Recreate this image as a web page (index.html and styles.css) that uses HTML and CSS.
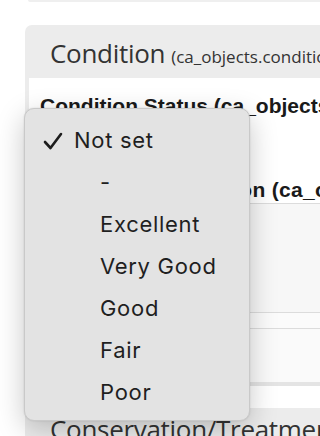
FILE: index.html
```html
<!DOCTYPE html>
<html>
<head>
<meta charset="utf-8">
<link rel="stylesheet" href="styles.css">
</head>
<body>
<div class="topbar"></div>
<div class="panel">
  <div class="panel-head"><span class="title">Condition</span> <span class="code">(ca_objects.condition)</span></div>
  <div class="panel-body">
    <div class="label label-first">Condition Status (ca_objects.condition_status)</div>
    <div class="label label-second">Condition Description (ca_objects.condition_desc)</div>
    <div class="textbox"></div>
    <div class="rule"></div>
    <div class="gap"></div>
    <div class="rule"></div>
    <div class="space"></div>
    <div class="band"></div>
    <div class="tail"></div>
  </div>
  <div class="panel-head second"><span class="title">Conservation/Treatment</span></div>
</div>

<div class="menu">
  <div class="item checked"><svg class="check" viewBox="0 0 20 18" width="20" height="18"><path d="M2 10 L7.5 16 L18 2" fill="none" stroke="#1d1d1d" stroke-width="2.6" stroke-linecap="round" stroke-linejoin="round"/></svg><span>Not set</span></div>
  <div class="item">-</div>
  <div class="item">Excellent</div>
  <div class="item">Very Good</div>
  <div class="item">Good</div>
  <div class="item">Fair</div>
  <div class="item">Poor</div>
</div>
</body>
</html>
```

FILE: styles.css
```css
html, body {
  margin: 0;
  padding: 0;
  background: #ffffff;
  height: 436px;
  overflow: hidden;
}
body {
  font-family: "Liberation Sans", Arial, sans-serif;
  position: relative;
}
.topbar {
  height: 2px;
  margin-left: 28px;
  background: #efefef;
  border-bottom-left-radius: 2px;
}
.panel {
  margin-top: 23px;
  margin-left: 25px;
  background: #ececec;
  border-top-left-radius: 7px;
  white-space: nowrap;
  overflow: hidden;
}
.panel-head {
  height: 53px;
  padding-left: 25px;
  display: flex;
  align-items: baseline;
  gap: 6px;
  box-sizing: border-box;
  padding-top: 10px;
  color: #333;
  font-family: "Open Sans", sans-serif;
}
.panel-head .title {
  font-size: 26px;
  letter-spacing: -0.3px;
}
.panel-head .code {
  font-size: 17px;
}
.panel-head.second {
  height: 30px;
  padding-top: 3px;
}
.panel-body {
  margin-left: 4px;
  background: #ffffff;
  height: 330px;
}
.label {
  font-weight: bold;
  font-size: 21px;
  color: #1a1a1a;
  padding-left: 11px;
  line-height: 24px;
  height: 24px;
}
.label-first {
  padding-top: 16px;
}
.label-second {
  margin-top: 60px;
  padding-bottom: 1px;
  letter-spacing: 0.3px;
  border-bottom: 1px solid #dcdcdc;
}
.textbox {
  height: 108px;
  background: #f7f7f7;
}
.rule {
  height: 1px;
  background: #dcdcdc;
}
.gap {
  height: 15px;
  background: #fbfbfb;
}
.space {
  height: 53px;
  background: #fafafa;
}
.band {
  height: 4px;
  background: #e4e4e4;
}
.tail {
  height: 21px;
  background: #ffffff;
}
.menu {
  position: absolute;
  left: 24px;
  top: 108px;
  width: 226px;
  height: 313px;
  box-sizing: border-box;
  background: #e3e3e3;
  border: 1px solid #c9c9c9;
  border-radius: 10px;
  box-shadow: 0 8px 28px rgba(0, 0, 0, 0.22), 0 0 2px rgba(0, 0, 0, 0.12);
  padding-top: 10px;
  font-family: Inter, "Noto Sans", sans-serif;
  font-size: 22px;
  letter-spacing: 0.7px;
  color: #1f1f1f;
}
.item {
  height: 42px;
  line-height: 42px;
  padding-left: 75px;
  display: flex;
  align-items: center;
}
.item.checked {
  padding-left: 18px;
}
.check {
  margin-right: 11px;
  margin-top: 2px;
}
```
